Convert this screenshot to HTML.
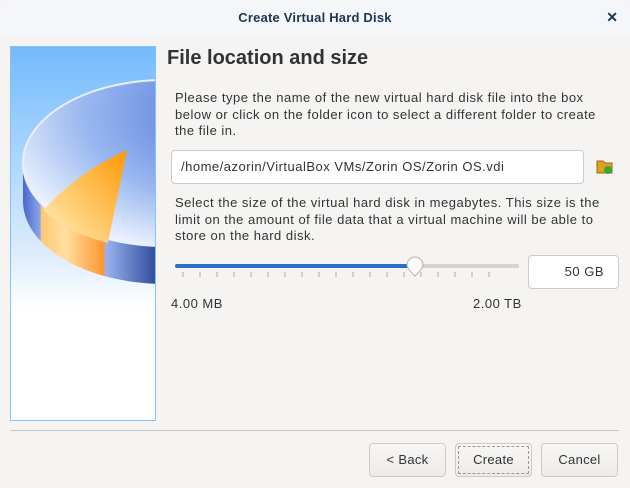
<!DOCTYPE html>
<html><head><style>
*{margin:0;padding:0;box-sizing:border-box}
body{width:630px;height:488px;background:#f5f4f2;font-family:"Liberation Sans",sans-serif;color:#2e3436;position:relative;overflow:hidden}
.tb{position:absolute;left:0;top:0;width:630px;height:36px;background:#f5f6fa;border-radius:8px 8px 0 0}
.tb .t{position:absolute;top:10px;width:100%;text-align:center;font-size:13px;font-weight:bold;color:#1c3550;letter-spacing:0.2px}
.tb .x{position:absolute;right:12px;top:9px;font-size:14px;font-weight:bold;color:#1c3550}
.abs{position:absolute}
.p{font-size:13px;line-height:16.5px;color:#333;letter-spacing:0.5px}
.box{background:#fff;border:1px solid #cfcac5;border-radius:4px}
.btn{position:absolute;top:443px;height:34px;width:77px;border:1px solid #cfcac5;border-radius:4px;background:linear-gradient(#f8f7f6,#edebe9);font-size:13px;text-align:center;line-height:32px;color:#333;letter-spacing:0.3px}
</style></head><body>
<div class="tb"><div class="t">Create Virtual Hard Disk</div><div class="x">✕</div></div>
<svg class="abs" style="left:10px;top:46px" width="146" height="375" viewBox="0 0 146 375">
<defs>
<linearGradient id="bg" x1="0" y1="0" x2="0" y2="1"><stop offset="0" stop-color="#72bbfc"/><stop offset="0.55" stop-color="#dcecfd"/><stop offset="0.7" stop-color="#fff"/><stop offset="1" stop-color="#fff"/></linearGradient>
<radialGradient id="top" cx="0.75" cy="0.2" r="0.9"><stop offset="0" stop-color="#4a6fd8"/><stop offset="0.6" stop-color="#9ab8f0"/><stop offset="1" stop-color="#f4f8ff"/></radialGradient>
<linearGradient id="side" gradientUnits="userSpaceOnUse" x1="13" y1="0" x2="155" y2="0"><stop offset="0" stop-color="#4a66c8"/><stop offset="0.12" stop-color="#8aa6ec"/><stop offset="0.13" stop-color="#ffc870"/><stop offset="0.3" stop-color="#ffe0a0"/><stop offset="0.57" stop-color="#ff9530"/><stop offset="0.58" stop-color="#9ab2f0"/><stop offset="1" stop-color="#1d3a8c"/></linearGradient>
<linearGradient id="or" x1="1" y1="0" x2="0" y2="1"><stop offset="0" stop-color="#ff9800"/><stop offset="1" stop-color="#fff0c0"/></linearGradient>
</defs>
<rect x="0.5" y="0.5" width="145" height="374" fill="url(#bg)" stroke="#86c1fb"/>
<path d="M13 117 L13 155 A142 83 0 0 0 155 238 L155 200 A142 83 0 0 1 13 117Z" fill="url(#side)"/>
<ellipse cx="155" cy="117" rx="142" ry="83" fill="url(#top)" stroke="#e8f0ff" stroke-width="2"/>
<path d="M33 164 Q70 125 117 104 L98 197 Q60 188 33 164Z" fill="url(#or)"/>
<rect x="0.5" y="0.5" width="145" height="374" fill="none" stroke="#86c1fb"/>
</svg>
<div class="abs" style="left:167px;top:47px;font-size:20px;font-weight:bold;color:#2e3436">File location and size</div>
<div class="abs p" style="left:175px;top:90px;width:430px">Please type the name of the new virtual hard disk file into the box below or click on the folder icon to select a different folder to create the file in.</div>
<div class="abs box" style="left:171px;top:150px;width:413px;height:34px;font-size:13px;line-height:32px;padding-left:9px;color:#333;letter-spacing:0.5px">/home/azorin/VirtualBox VMs/Zorin OS/Zorin OS.vdi</div>
<svg class="abs" style="left:596px;top:158px" width="18" height="17"><path d="M1 3h6l2 2h7v10H1z" fill="#e0a020" stroke="#9a6a10"/><circle cx="12" cy="12" r="4" fill="#3aa63a"/></svg>
<div class="abs p" style="left:175px;top:195px;width:440px">Select the size of the virtual hard disk in megabytes. This size is the limit on the amount of file data that a virtual machine will be able to store on the hard disk.</div>
<div class="abs" style="left:175px;top:264px;width:344px;height:4px;background:#d6d2cd;border-radius:2px"></div>
<div class="abs" style="left:175px;top:264px;width:240px;height:4px;background:#2b6fc8;border-radius:2px"></div>
<svg class="abs" style="left:175px;top:270px" width="345" height="8"><g stroke="#b0aba6">
<path d="M8 2v5M25 2v5M42 2v5M59 2v5M76 2v5M93 2v5M110 2v5M127 2v5M144 2v5M161 2v5M178 2v5M195 2v5M212 2v5M229 2v5M246 2v5M263 2v5M280 2v5M297 2v5M314 2v5"/></g></svg>
<svg class="abs" style="left:405px;top:256px" width="22" height="22"><path d="M10 1a8 8 0 0 1 8 8c0 3-4 7-8 11c-4-4-8-8-8-11a8 8 0 0 1 8-8z" fill="#fafafa" stroke="#b8b3ae"/></svg>
<div class="abs box" style="left:528px;top:255px;width:91px;height:34px;font-size:13px;line-height:32px;text-align:right;padding-right:14px;color:#333;letter-spacing:0.5px">50 GB</div>
<div class="abs p" style="left:171px;top:296px">4.00 MB</div>
<div class="abs p" style="left:473px;top:296px">2.00 TB</div>
<div class="abs" style="left:10px;top:430px;width:609px;height:1px;background:#c8c4c0"></div>
<div class="btn" style="left:369px">&lt; Back</div>
<div class="btn" style="left:455px;outline:1px dashed #999;outline-offset:-4px">Create</div>
<div class="btn" style="left:541px">Cancel</div>
</body></html>
